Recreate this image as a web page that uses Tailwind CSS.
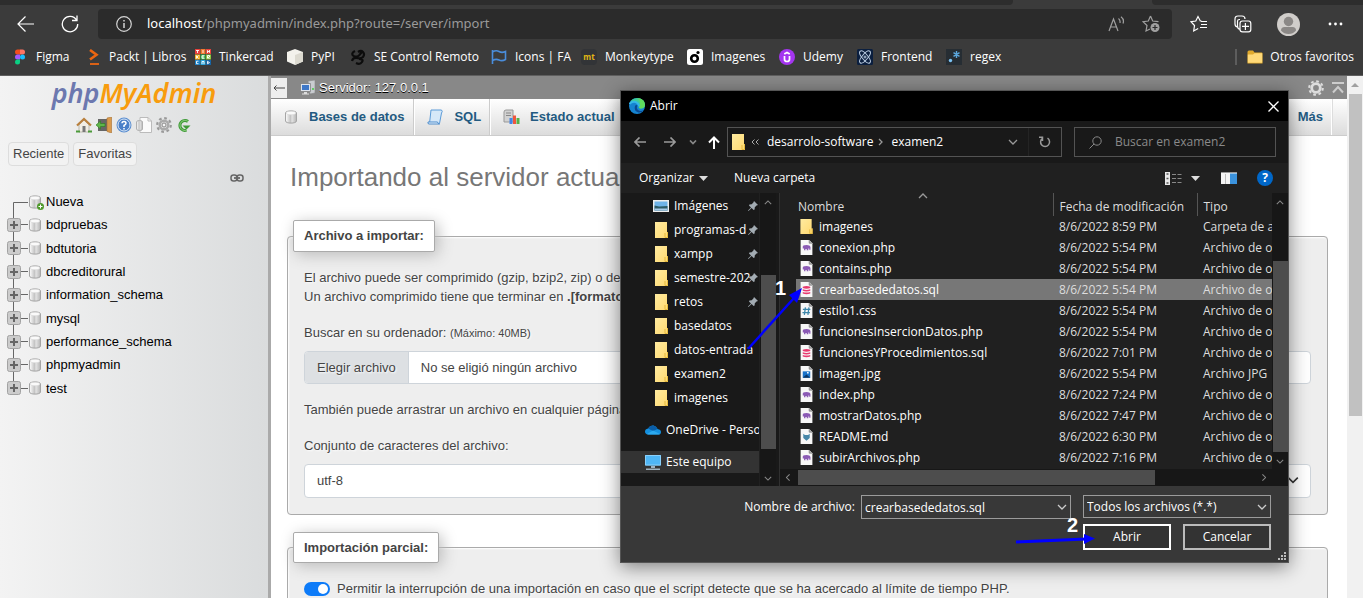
<!DOCTYPE html>
<html lang="es">
<head>
<meta charset="utf-8">
<meta name="viewport" content="width=device-width, initial-scale=1">
<title>localhost / 127.0.0.1 | phpMyAdmin</title>
<script src="https://cdn.jsdelivr.net/npm/@tailwindcss/browser@4"></script>
</head>
<body class="relative flex h-screen flex-col overflow-hidden bg-white font-['Liberation_Sans',Arial,sans-serif] text-[13px]">

<!-- Shared icons -->
<svg class="absolute size-0" aria-hidden="true">
  <defs>
    <linearGradient id="cyl" x1="0" x2="1"><stop offset="0" stop-color="#fff"/><stop offset=".45" stop-color="#c4c4c4"/><stop offset=".6" stop-color="#e2e2e2"/><stop offset="1" stop-color="#b4b4b4"/></linearGradient>
    <linearGradient id="fold" x1="0" x2="1" y2="1"><stop offset="0" stop-color="#ffeba0"/><stop offset="1" stop-color="#ffd970"/></linearGradient>
  </defs>
  <symbol id="db" viewBox="0 0 14 16"><path d="M1.500 4C1.500 1.200 12.500 1.200 12.500 4V12C12.500 14.800 1.500 14.800 1.500 12Z" fill="url(#cyl)" stroke="#a5a5a5"/><ellipse cx="7" cy="4" rx="4.800" ry="1.800" fill="#fafafa" stroke="#d5d5d5" stroke-width=".6"/></symbol>
  <symbol id="plus" viewBox="0 0 14 14"><rect x=".5" y=".5" width="13" height="13" rx="2" fill="#ccc" stroke="#a3a3a3"/><path d="M7 3v8M3 7h8" stroke="#666" stroke-width="2"/></symbol>
  <symbol id="folder" viewBox="0 0 13 16"><path d="M0 0h12v10h1v6H0z" fill="url(#fold)"/><path d="M12.500 10v5.500H10V11" fill="none" stroke="#e5b93c"/></symbol>
  <symbol id="pin" viewBox="0 0 10 10"><path d="M6 0 10 4 8.500 4.600 6.800 6.300 6.600 8.600 5.600 9 3.600 7 .5 10 0 9.500 3 6.400 1 4.400 1.400 3.400 3.700 3.200 5.400 1.500Z" fill="#a3acb3"/></symbol>
  <symbol id="sheet" viewBox="0 0 12 14"><path d="M.5 0H8.500L11.500 3V14H.5Z" fill="#f7f7f7"/><path d="M8.500 0V3H11.500" fill="#aaa" stroke="#777" stroke-width=".6"/></symbol>
  <symbol id="php" viewBox="0 0 12 14"><use href="#sheet"/><path d="M2.500 6Q3 4.800 4.500 5 6 4.500 7.500 5 9.500 5 9.700 6.500V9H8.500V8H7.700V9.500H6.200V8.500H5V9.500H3.700V8H2.500Z" fill="#8b5ab5"/></symbol>
  <symbol id="sql" viewBox="0 0 12 14"><use href="#sheet"/><path d="M2.500 4.500Q6 3 9.500 4.500V5.700Q6 7 2.500 5.700zM2.500 6.800Q6 8 9.500 6.800V8.200Q6 9.500 2.500 8.200zM2.500 9.300Q6 10.500 9.500 9.300V10.700Q6 12 2.500 10.700z" fill="#e8396f"/></symbol>
  <symbol id="css" viewBox="0 0 12 14"><use href="#sheet"/><path d="M5 4 4 11M8.300 4l-1 7M2.600 6h7M2.200 9h7" stroke="#3d87ab" stroke-width="1.200" fill="none"/></symbol>
  <symbol id="jpg" viewBox="0 0 12 14"><use href="#sheet"/><path d="M2.500 5h7v6h-7z" fill="#1a73c9"/><path d="M2.500 11 6 8l3.500 3z" fill="#0b3768"/><path d="M6.500 5.500h1.500v1.500H6.500z" fill="#fff"/></symbol>
  <symbol id="md" viewBox="0 0 12 14"><use href="#sheet"/><path d="M3 4.500l1.500 1h3l1.500-1v4L6 11 3 8.500z" fill="#4787a8"/></symbol>
  <symbol id="chev" viewBox="0 0 10 6"><path d="M1 1 5 5 9 1" fill="none" stroke="currentColor" stroke-width="1.300"/></symbol>
</svg>

<!-- Browser chrome -->
<header class="shrink-0 border-b border-[#5f5f5f] bg-[#3b3b3b] font-['Open_Sans',sans-serif] text-white">
  <div class="flex h-[5px] justify-between">
    <div class="w-[1013px] rounded-br bg-[#2d2d2d]"></div>
    <div class="w-[211px] rounded-bl bg-[#2d2d2d]"></div>
  </div>
  <div class="mt-1 flex h-[30px] items-center">
    <button aria-label="Atrás" class="ml-[17px] w-[18px]"><svg viewBox="0 0 18 18" class="size-[18px]" fill="none" stroke="#fff" stroke-width="1.200"><path d="M17 9H1M8.500 1.500 1 9l7.500 7.500"/></svg></button>
    <button aria-label="Actualizar" class="ml-[26px] w-[18px]"><svg viewBox="0 0 18 18" class="size-[18px]" fill="none" stroke="#fff" stroke-width="1.300"><path d="M15.500 5A7.700 7.700 0 1 0 16.700 9M16 .5V5.500H11"/></svg></button>
    <div class="ml-[19px] mr-[18px] flex h-[30px] flex-1 items-center rounded bg-[#2b2b2b] pl-[18px] pr-3">
      <svg viewBox="0 0 16 16" class="size-4" fill="none" stroke="#d5d5d5" stroke-width="1.200"><circle cx="8" cy="8" r="7.300"/><path d="M8 7v5M8 4v1.600" stroke-width="1.500"/></svg>
      <p class="ml-[15px] flex-1 whitespace-nowrap font-['Noto_Sans',sans-serif] text-[13px] text-[#9a9a9a]"><span class="text-white">localhost</span>/phpmyadmin/index.php?route=/server/import</p>
      <svg viewBox="0 0 17 16" class="h-4 w-[17px]" fill="none" stroke="#a0a0a0" stroke-width="1.200"><path d="M1 15 5.500 3 10 15M2.500 11h6M10.500 2.500Q12.500 4 12 7M13 .8Q16.500 3.500 15 7.500"/></svg>
      <svg viewBox="0 0 18 18" class="ml-[17px] h-[18px] w-[18px]" fill="none" stroke="#a0a0a0" stroke-width="1.200"><path d="M8.500 1 10.700 6 16.500 6.700M8.500 1 6.300 6 1 6.700 5 10.500 4 16 8 14"/><circle cx="13" cy="12.500" r="4.500" fill="#a0a0a0" stroke="none"/><path d="M13 10v5M10.500 12.500h5" stroke="#2b2b2b"/></svg>
    </div>
    <div class="flex items-center pr-[20px]">
      <button aria-label="Favoritos" class="w-[18px]"><svg viewBox="0 0 18 18" class="size-[18px]" fill="none" stroke="#fff" stroke-width="1.200"><path d="M11.500 6H10.300L8 1.500 5.800 6 1 6.700 4.500 10.500 3.700 16 8.200 13.500M11 6.500h6M11 9.500h6M10 12.500h7"/></svg></button>
      <button aria-label="Colecciones" class="ml-[26px] w-[18px]"><svg viewBox="0 0 18 18" class="size-[18px]" fill="none" stroke="#fff" stroke-width="1.200"><path d="M3.500 12Q1 11.500 1 9V4Q1 1 4 1H8Q11 1 11 4M6 14.500Q3.500 14 3.500 11V6Q3.500 4.500 5.500 4.500H6M8.500 6h6Q16.800 6 16.800 8.500v6Q16.800 16.800 14.500 16.800h-6Q6 16.800 6 14.500v-6Q6 6 8.500 6M11.400 8v7M8 11.400h7"/></svg></button>
      <button aria-label="Perfil" class="ml-[25px] w-[23px]"><svg viewBox="0 0 23 23" class="size-[23px]"><circle cx="11.500" cy="11.500" r="11.500" fill="#d0cdca"/><circle cx="11.500" cy="8.500" r="4.700" fill="#8b8886"/><path d="M4 17.500Q4 14 7.500 14h8Q19 14 19 17.500 16 21 11.500 21 7 21 4 17.500" fill="#8b8886"/></svg></button>
      <button aria-label="Más opciones" class="ml-7 w-[15px]"><svg viewBox="0 0 15 4" class="h-1 w-[15px]" fill="#fff"><circle cx="2" cy="2" r="1.400"/><circle cx="7.500" cy="2" r="1.400"/><circle cx="13" cy="2" r="1.400"/></svg></button>
    </div>
  </div>
  <nav aria-label="Marcadores" class="flex h-9 items-center whitespace-nowrap pl-3 pr-[9px] text-[12px]">
    <a href="#" class="flex w-[76px] items-center gap-2"><svg viewBox="0 0 16 16" class="size-4"><path d="M5.500.5H8v5H5.500a2.500 2.500 0 0 1 0-5" fill="#f24e1e"/><path d="M8 .5h2.500a2.500 2.500 0 0 1 0 5H8z" fill="#ff7262"/><path d="M5.500 5.500H8v5H5.500a2.500 2.500 0 0 1 0-5" fill="#a259ff"/><circle cx="10.500" cy="8" r="2.500" fill="#1abcfe"/><path d="M5.500 10.500H8V13a2.500 2.500 0 1 1-2.500-2.500" fill="#0acf83"/></svg>Figma</a>
    <a href="#" class="flex w-[107px] items-center gap-[5px]"><svg viewBox="0 0 16 16" class="size-4" fill="none" stroke="#ec6611"><path d="M2 15h9" stroke-width="1.800"/><path d="M2 1 8.500 5.800 2 10.500" stroke-width="2.600"/></svg>Packt | Libros</a>
    <a href="#" class="flex w-[92px] items-center gap-2"><svg viewBox="0 0 16 16" class="size-4"><path fill="#e8413c" d="M0 0h5v5H0z"/><path fill="#f2782f" d="M5.500 0h5v5h-5z"/><path fill="#e8413c" d="M11 0h5v5h-5z"/><path fill="#f5b72f" d="M0 5.500h5v5H0z"/><path fill="#39b54a" d="M5.500 5.500h5v5h-5z"/><path fill="#8cc63f" d="M11 5.500h5v5h-5z"/><path fill="#1b7fc4" d="M0 11h5v5H0z"/><path fill="#2ba8e0" d="M5.500 11h5v5h-5z"/><path fill="#1565a7" d="M11 11h5v5h-5z"/><path d="M1 1.500h3M2.500 1.500V4M8 1v3M12.500 4V1.500l2 2V1M1.500 6.500v3M3.500 6.500l-1.500 1.500 1.500 1.500M9.500 6.700h-2.500v2.600h2.500M7 8h2M12.500 9.500v-3h2v1.500l-2 .5 2 1M3.500 12.200h-2v2.500h2M7 15v-2.500h2V15M12.500 12.300v2.500l2-1.200z" fill="none" stroke="#fff" stroke-width=".9"/></svg>Tinkercad</a>
    <a href="#" class="flex w-[63px] items-center gap-2"><svg viewBox="0 0 16 16" class="size-4"><path d="M8 0 16 3V12.500L8 16 0 12.500V3z" fill="#f3f2ec"/><path d="M8 6l8-3v9.500L8 16z" fill="#dcdad0"/></svg>PyPI</a>
    <a href="#" class="flex w-[141px] items-center gap-2"><svg viewBox="0 0 16 16" class="size-4" fill="none" stroke="#0c0c0c" stroke-width="2.200"><path d="M5 2Q1 4 3 6.500 6 9 9 6.500L12 3M8 3q3-2 5 0t0 5q-2 2-6 1T2 12M6 14q4 2 6-1t-3-3" /></svg>SE Control Remoto</a>
    <a href="#" class="flex w-[90px] items-center gap-2"><svg viewBox="0 0 16 16" class="size-4" fill="none" stroke="#4a8ddb" stroke-width="1.600"><path d="M1.500 1v14M1.500 3Q5 .8 8 2.500T14.500 2.500V10.500Q11 12.500 8 11T1.500 11.500"/></svg>Icons | FA</a>
    <a href="#" class="flex w-[106px] items-center gap-2"><span class="flex size-4 items-center justify-center rounded-sm bg-[#323437] text-[8px] font-bold text-[#e2b714]">mt</span>Monkeytype</a>
    <a href="#" class="flex w-[92px] items-center gap-2"><svg viewBox="0 0 16 16" class="size-4"><rect width="16" height="16" rx="2.500" fill="#fff"/><circle cx="7.500" cy="9.500" r="3.300" fill="none" stroke="#000" stroke-width="2.600"/><circle cx="11" cy="3.500" r="1.600" fill="#000"/></svg>Imagenes</a>
    <a href="#" class="flex w-[78px] items-center gap-2"><svg viewBox="0 0 16 16" class="size-4"><circle cx="8" cy="8" r="8" fill="#a435f0"/><path d="M5.500 7v3.200Q5.500 12.500 8 12.500t2.500-2.300V7M5.300 5 8 3.400 10.700 5" fill="none" stroke="#fff" stroke-width="1.700"/></svg>Udemy</a>
    <a href="#" class="flex w-[89px] items-center gap-2"><svg viewBox="0 0 16 16" class="size-4"><rect width="16" height="16" rx="1.500" fill="#0b1f3f"/><g fill="none" stroke="#b9cbe0"><ellipse cx="8" cy="8" rx="7.500" ry="2.800" transform="rotate(50 8 8)"/><ellipse cx="8" cy="8" rx="7.500" ry="2.800" transform="rotate(-50 8 8)"/><circle cx="8" cy="8" r="1"/></g></svg>Frontend</a>
    <a href="#" class="flex items-center gap-2"><svg viewBox="0 0 16 16" class="size-4"><path fill="#262d33" d="M0 0h16v16H0z"/><circle cx="4.500" cy="11.500" r="1.700" fill="#7cc4f5"/><path d="M10.500 2v7M7.500 3.700l6 3.600M13.500 3.700l-6 3.600" stroke="#5ba7dd" stroke-width="1.400"/></svg>regex</a>
    <a href="#" class="ml-auto flex items-center gap-[7px]"><span class="mr-[3px] h-4 w-0.5 bg-[#5d5d5d]"></span><svg viewBox="0 0 16 14" class="h-[14px] w-4"><path d="M.5 2Q.5.500 2 .5H6L7.500 2.500H14.500Q15.500 2.500 15.500 3.500V13.500H.5Z" fill="#e0a92c"/><path d="M.8 4.500H6l1.500-1.300h7.700V12.800H.8z" fill="#ffd978"/></svg>Otros favoritos</a>
  </nav>
</header>

<div class="flex min-h-0 flex-1">
  <!-- Navigation panel -->
  <aside class="w-[271px] shrink-0 border-r-[3px] border-[#aaa] bg-linear-to-r from-[#f3f3f3] to-[#dadcdd]">
    <a href="#" class="flex h-[34px] items-center justify-center font-['Noto_Sans',sans-serif] text-[27px] font-semibold italic text-[#6c78af]">php<span class="text-[#f89c0e]">MyAdmin</span></a>
    <div class="mt-[6px] flex h-[18px] items-center justify-center gap-1">
      <svg viewBox="0 0 16 16" class="size-4"><path d="M3 8v7h10V8L8 3z" fill="#f1ede4" stroke="#998" stroke-width=".6"/><path d="M6.500 9h3v6h-3z" fill="#777"/><path d="M1 8.500 8 2l7 6.500" fill="none" stroke="#b9803e" stroke-width="2.200"/><path d="M0 14.500h4M12 14.500h4" stroke="#4c9a3a" stroke-width="2"/></svg>
      <svg viewBox="0 0 16 16" class="size-4"><path d="M2 2h9v12H2z" fill="#666"/><path d="M11 1 15.500 0v16L11 14.500z" fill="#d99a4e" stroke="#a87030" stroke-width=".6"/><path d="M0 8l4.500-4v2.500H9v3H4.500V12z" fill="#5fb54a" stroke="#2b7a1f" stroke-width=".6"/></svg>
      <svg viewBox="0 0 16 16" class="size-4"><circle cx="8" cy="8" r="7.500" fill="#5c8fd0"/><circle cx="8" cy="8" r="6" fill="#4a80c8" stroke="#dbe8f8"/><path d="M6 6.300Q6 4.500 8 4.500t2 1.800Q10 7.500 8 8.500V10M8 11v1.500" fill="none" stroke="#fff" stroke-width="1.500"/></svg>
      <svg viewBox="0 0 16 16" class="size-4"><path d="M4 .5H12L15.500 4v11.500H4z" fill="#fafafa" stroke="#bbb"/><path d="M12 .5V4h3.500" fill="none" stroke="#bbb"/><path d="M.5 5Q.5 3.500 3.500 3.500T6.500 5v7Q6.500 13.500 3.500 13.500T.5 12z" fill="url(#cyl)" stroke="#b0b0b0"/></svg>
      <svg viewBox="0 0 16 16" class="size-4"><circle cx="8" cy="8" r="6.800" fill="none" stroke="#999" stroke-width="2.200" stroke-dasharray="2.700 2.640"/><circle cx="8" cy="8" r="4.300" fill="#ddd" stroke="#aaa" stroke-width="2.400"/><circle cx="8" cy="8" r="2" fill="#f5f5f5" stroke="#888"/></svg>
      <svg viewBox="0 0 16 16" class="size-4"><path d="M10.500 13.200A5 5 0 1 1 12 4.500" fill="none" stroke="#3d9a36" stroke-width="3"/><path d="M10.500 13.200A5 5 0 1 1 12 4.500" fill="none" stroke="#8fd07f" stroke-width="1"/><path d="M6.500 8.500H14.500L10.500 12.500z" fill="#3d9a36"/></svg>
    </div>
    <div class="mt-2 flex gap-1 pl-2">
      <button class="h-6 rounded border border-[#ddd] bg-[#f2f2f2] px-1 text-[13px] text-[#444]">Reciente</button>
      <button class="h-6 rounded border border-[#ddd] bg-[#f2f2f2] px-1 text-[13px] text-[#444]">Favoritas</button>
    </div>
    <div class="mt-2 flex justify-end pr-6"><svg viewBox="0 0 14 8" class="h-2 w-[14px]" fill="none" stroke="#666" stroke-width="1.500"><rect x="1" y="1" width="6" height="6" rx="2.500"/><rect x="7" y="1" width="6" height="6" rx="2.500"/><path d="M4 4h6" stroke-width="1.800"/></svg></div>
    <div class="relative mt-2 h-[210px] pl-[7px]">
      <svg class="absolute left-[13px] top-3 h-[187px] w-4" fill="none" stroke="#666"><path d="M15 .5H.5V187"/></svg>
      <ul id="tree" class="relative grid h-full auto-rows-fr text-[13px] text-black"></ul>
    </div>
  </aside>

  <!-- Main panel -->
  <main class="min-w-0 flex-1 overflow-hidden whitespace-nowrap text-[#444]">
    <div class="flex h-[23px] items-center bg-[#888]">
      <button aria-label="Ocultar panel" class="flex h-5 w-4 items-center justify-center bg-[#eee]"><svg viewBox="0 0 12 6" class="h-[6px] w-3" fill="none" stroke="#444"><path d="M12 3H1M3.500.5 1 3l2.500 2.500"/></svg></button>
      <svg viewBox="0 0 16 16" class="ml-[13px] size-4"><path d="M8 1l7-1v13l-5 1z" fill="#c9ccd0" stroke="#888" stroke-width=".6"/><path d="M.5 3.500h10v8H.5z" fill="#dde3ec" stroke="#777" stroke-width=".7"/><path d="M2 5h7v5H2z" fill="#3f78c8"/><path d="M4 12h3v1.500h2v1H2v-1h2z" fill="#ddd"/><circle cx="13" cy="9" r=".9" fill="#3c3"/></svg>
      <a href="#" class="ml-[3px] text-[13px] text-white [text-shadow:0_1px_0_#000]">Servidor: 127.0.0.1</a>
      <svg viewBox="0 0 16 16" class="ml-auto size-4"><circle cx="8" cy="8" r="6.800" fill="none" stroke="#ddd" stroke-width="2" stroke-dasharray="2.700 2.640"/><circle cx="8" cy="8" r="4.300" fill="none" stroke="#ddd" stroke-width="2.800"/></svg>
      <svg viewBox="0 0 12 12" class="ml-2 mr-[3px] size-3" fill="none" stroke="#ccc" stroke-width="2"><path d="M0 1h12M1 10.500 6 5l5 5.500"/></svg>
    </div>
    <nav class="flex h-[37px] items-stretch border-b border-[#ccc] bg-linear-to-b from-white to-[#dcdcdc] text-[13px] font-bold text-[#235a81]">
      <a href="#" class="flex items-center gap-[11px] border-r border-[#ccc] pl-[13px] pr-[9px]"><svg class="h-4 w-[14px]"><use href="#db"/></svg>Bases de datos</a>
      <a href="#" class="flex items-center gap-[11px] border-l border-r border-l-white border-r-[#ccc] pl-3 pr-2"><svg viewBox="0 0 16 16" class="size-4"><path d="M4 1h10.500Q16 2.500 14.500 4L12.500 14.500H2.500z" fill="#d6e8f8" stroke="#5b9bd8"/><path d="M1 13h9.500Q11 15 12.500 15H2Q.5 15 1 13" fill="#eef6fd" stroke="#4a8bcc"/></svg>SQL</a>
      <a href="#" class="flex items-center gap-[10px] border-l border-white pl-3"><svg viewBox="0 0 17 16" class="h-4 w-[17px]"><path d="M1 3Q1 1 3 1h7v12H1z" fill="#d2d2d2" stroke="#999"/><path d="M3 4h5M3 6.500h5" stroke="#888"/><path d="M6.500 9h3v6h-3z" fill="#4285e8"/><path d="M10 6.500h3V15h-3z" fill="#f0563d"/><path d="M13.500 9h3v6h-3z" fill="#58b148"/></svg>Estado actual</a>
      <a href="#" class="ml-auto flex items-center border-r border-white pr-2">Más</a>
      <span class="w-[15px] border-l border-[#ddd]"></span>
    </nav>
    <div class="pl-4 pr-[19px]">
      <h1 class="mt-[23px] pl-[3px] text-[26px] leading-9 text-[#777]">Importando al servidor actual</h1>
      <fieldset class="mt-[25px] min-w-0 rounded border border-[#aaa] bg-[#eee] px-4 pb-4 shadow-[inset_1px_1px_2px_#fff] [text-shadow:1px_1px_2px_#fff]">
        <legend class="-ml-[11px] flex h-8 items-center rounded-xs border border-[#aaa] bg-white px-[10px] font-bold shadow-[3px_3px_15px_#bbb]">Archivo a importar:</legend>
        <p class="pt-4 leading-[19px]">El archivo puede ser comprimido (gzip, bzip2, zip) o descomprimido.<br>Un archivo comprimido tiene que terminar en <b>.[formato].[compresión]</b>.</p>
        <label for="file" class="mt-[17px] block leading-[19px]">Buscar en su ordenador: <small class="text-[11px]">(Máximo: 40MB)</small></label>
        <div class="relative mt-2 flex h-[33px] overflow-hidden rounded border border-[#ced4da] bg-white">
          <input id="file" type="file" class="absolute inset-0 opacity-0">
          <span class="flex items-center border-r border-[#ced4da] bg-[#dde0e3] px-3">Elegir archivo</span>
          <span class="flex items-center px-3">No se eligió ningún archivo</span>
        </div>
        <p class="mt-4 leading-[19px]">También puede arrastrar un archivo en cualquier página.</p>
        <label for="charset" class="mt-[17px] block leading-[19px]">Conjunto de caracteres del archivo:</label>
        <div class="relative mt-[9px]">
          <select id="charset" class="block h-[34px] w-full appearance-none rounded border border-[#ced4da] bg-white px-3"><option>utf-8</option></select>
          <svg class="absolute right-3 top-3 h-2 w-3 text-[#333]"><use href="#chev"/></svg>
        </div>
      </fieldset>
      <fieldset class="mt-[17px] min-w-0 rounded border border-[#aaa] bg-[#eee] px-4 pb-4 shadow-[inset_1px_1px_2px_#fff] [text-shadow:1px_1px_2px_#fff]">
        <legend class="-ml-[11px] flex h-[31px] items-center rounded-xs border border-[#aaa] bg-white px-[10px] font-bold shadow-[3px_3px_15px_#bbb]">Importación parcial:</legend>
        <label class="mt-4 flex items-center leading-[19px]">
          <input type="checkbox" checked class="peer sr-only">
          <span class="mr-[7px] flex h-[14px] w-[26px] items-center justify-end rounded-full bg-[#0d7bf8] px-0.5"><span class="size-[10px] rounded-full bg-white"></span></span>
          Permitir la interrupción de una importación en caso que el script detecte que se ha acercado al límite de tiempo PHP.
        </label>
      </fieldset>
    </div>
  </main>
  <div class="flex w-4 shrink-0 flex-col items-center bg-[#f1f1f1]">
    <svg viewBox="0 0 8 4" class="my-[7px] h-1 w-2"><path d="M0 4 4 0l4 4z" fill="#a0a0a0"/></svg>
    <div class="h-[322px] w-[13px] bg-[#c1c1c1]"></div>
  </div>
</div>

<!-- File picker window -->
<section role="dialog" aria-label="Abrir" class="absolute left-[620px] top-[90px] flex w-[669px] flex-col border border-[#555] bg-[#191919] font-['Open_Sans',sans-serif] text-[12px] text-white shadow-[0_4px_18px_#0007]">
  <div class="flex h-[30px] items-center bg-black pl-2 pr-[9px]">
    <svg viewBox="0 0 16 16" class="size-4"><circle cx="8" cy="8" r="8" fill="#1583d0"/><path d="M.5 6Q2 0 8.500 0 16 1 16 7q-.5 4-5 3.500Q9 10 10 8.500 9.500 4.500 5 4 2 4 .5 6" fill="#3fcb9a"/><path d="M8.500 0Q16 1 16 7q-.5 4-5 3.500Q9 10 10 8.500q3-4-1.500-8.500" fill="#5fdc5d"/><path d="M.5 6Q2 3.500 5.500 3.700 9.700 4.500 10 8.500" fill="none" stroke="#34b7e8" stroke-width="2"/><path d="M6 8Q4.500 13 9.500 14.500 12 15 14.500 12.500 11 13.500 9 12 7 10 8.500 7.500 7 6.500 6 8" fill="#0b4a94"/></svg>
    <h2 class="ml-[5px] flex-1">Abrir</h2>
    <button aria-label="Cerrar"><svg viewBox="0 0 11 11" class="size-[11px]" stroke="#fff" stroke-width="1.300"><path d="m.5.500 10 10M10.500.5l-10 10"/></svg></button>
  </div>
  <div class="flex h-[42px] items-center pl-[13px] pr-3">
    <svg viewBox="0 0 12 10" class="h-[10px] w-3" fill="none" stroke="#9a9a9a" stroke-width="1.700"><path d="M12 5H1M5.500.500 1 5l4.500 4.500"/></svg>
    <svg viewBox="0 0 12 10" class="ml-[18px] h-[10px] w-3" fill="none" stroke="#9a9a9a" stroke-width="1.700"><path d="M0 5h11M6.500.500 11 5 6.500 9.500"/></svg>
    <svg viewBox="0 0 8 5" class="ml-[13px] h-[5px] w-2" fill="none" stroke="#888" stroke-width="1.700"><path d="m1 .5 3 3 3-3"/></svg>
    <svg viewBox="0 0 12 13" class="ml-[11px] h-[13px] w-3" fill="none" stroke="#fff" stroke-width="2"><path d="M6 13V1.500M1 6.500l5-5 5 5"/></svg>
    <div class="ml-[7px] flex h-[30px] flex-1 items-center whitespace-nowrap border border-[#535353] pl-1">
      <svg class="h-4 w-[13px]"><use href="#folder"/></svg>
      <svg viewBox="0 0 8 6" class="ml-[6px] h-[6px] w-2" fill="none" stroke="#aaa"><path d="M3.500.5 1 3l2.500 2.500M7.500.5 5 3l2.500 2.500"/></svg>
      <span class="ml-2">desarrolo-software</span>
      <svg viewBox="0 0 5 8" class="ml-[5px] h-2 w-[5px]" fill="none" stroke="#999" stroke-width="1.300"><path d="m1 1 3 3-3 3"/></svg>
      <span class="ml-2 flex-1">examen2</span>
      <svg class="mr-[10px] h-[6px] w-[10px] text-[#999]"><use href="#chev"/></svg>
      <span class="flex h-7 w-[33px] items-center justify-center border-l border-[#242424]"><svg viewBox="0 0 12 12" class="size-3" fill="none" stroke="#999" stroke-width="1.500"><path d="M8.500 2.200A4.500 4.500 0 1 1 3.500 2.300M3.500 5V1.200H0"/></svg></span>
    </div>
    <label class="ml-3 flex h-[30px] w-[202px] items-center border border-[#535353] pl-[14px]">
      <svg viewBox="0 0 13 13" class="size-[13px] shrink-0" fill="none" stroke="#888"><circle cx="8" cy="5" r="4.200"/><path d="M5 8 .5 12.500"/></svg>
      <input type="search" aria-label="Buscar" placeholder="Buscar en examen2" class="ml-[13px] w-full min-w-0 bg-transparent placeholder:text-[#8a8a8a]">
    </label>
  </div>
  <div class="flex h-[30px] items-center bg-[#202020] pl-[18px] pr-[15px]">
    <button class="flex w-[95px] items-center gap-[5px]">Organizar<svg viewBox="0 0 9 5" class="h-[5px] w-[9px]"><path d="M0 0h9L4.500 5z" fill="#ddd"/></svg></button>
    <button>Nueva carpeta</button>
    <svg viewBox="0 0 17 13" class="ml-auto h-[13px] w-[17px]"><path d="M0 0h5v13H0z" fill="#e8e8e8"/><path d="M1.500 2h2M1.500 6.500h2M1.500 11h2" stroke="#555" stroke-width="1.500"/><path d="M7 2.500h4M12.500 2.500h4M7 6.500h4M12.500 6.500h4M7 10.500h4M12.500 10.500h4" stroke="#888"/></svg>
    <svg viewBox="0 0 9 5" class="ml-[9px] h-[5px] w-[9px]"><path d="M0 0h9L4.500 5z" fill="#ddd"/></svg>
    <svg viewBox="0 0 16 12" class="ml-[21px] h-3 w-4"><path d="M0 0h16v12H0z" fill="#f4f4f4"/><path d="M4.500 2v10" stroke="#bbb"/><path d="M9 1.500h7V12H9z" fill="#3b93dd"/><path d="M0 .5h16" stroke="#999"/></svg>
    <button aria-label="Ayuda" class="ml-5 flex size-4 items-center justify-center rounded-full bg-[#0067c8] text-[12px] font-bold">?</button>
  </div>
  <div class="flex h-[293px]">
    <div class="flex w-[138px] flex-col overflow-hidden whitespace-nowrap pt-px">
      <ul id="places"></ul>
      <div class="mt-1 flex h-8 items-center pl-6"><svg viewBox="0 0 16 10" class="h-[10px] w-4 shrink-0"><path d="M3 9.500Q0 9 0 6.500 0 4 3 3.500 5 0 8.500.5 11.500 1 12.500 4 16 4.500 16 7 16 9.500 13.500 9.500z" fill="#1490df"/><path d="M3 3.500Q5 0 8.500.5 11.500 1 12.500 4L8 6z" fill="#0a5ea8"/><path d="M2 9 8 5.500 15 9q-1 .8-2 .5H3z" fill="#2ca9ee"/></svg><span class="ml-[5px]">OneDrive - Person</span></div>
      <div class="mt-[5px] flex h-[22px] items-center bg-[#333] pl-6"><svg viewBox="0 0 16 15" class="h-[15px] w-4"><path d="M0 0h16v10.500H0z" fill="#4fb6f5"/><path d="M.5.5h15v9.500H.5z" fill="none" stroke="#8bd0fa"/><path d="M6 11h4v2H6zM1 13.500h14v1.500H1z" fill="#9fb3c0"/></svg><span class="ml-[5px]">Este equipo</span></div>
    </div>
    <div class="flex w-[17px] flex-col items-center border-l border-[#202020] bg-[#171717] text-[#8a8a8a]">
      <svg class="mt-[7px] h-[5px] w-2 rotate-180"><use href="#chev"/></svg>
      <div class="mt-[70px] h-[174px] w-[15px] bg-[#4d4d4d]"></div>
      <svg class="mt-[27px] h-[5px] w-2"><use href="#chev"/></svg>
    </div>
    <div class="ml-[3px] flex min-w-0 flex-1 flex-col border-l border-[#303030] bg-[#202020]">
      <div class="flex h-[276px]">
        <div class="relative min-w-0 flex-1 overflow-hidden pl-4">
          <svg class="absolute left-[138px] top-0 h-[6px] w-[10px] rotate-180 text-[#999]"><use href="#chev"/></svg>
          <table class="w-full table-fixed whitespace-nowrap text-left">
            <thead><tr class="h-[23px] text-[#ddd]"><th class="w-[257px] border-r border-[#555] pl-0.5 pt-1 font-normal">Nombre</th><th class="w-36 border-r border-[#555] pl-[6px] pt-1 font-normal">Fecha de modificación</th><th class="overflow-hidden pl-[6px] pt-1 font-normal">Tipo</th></tr></thead>
            <tbody id="files"></tbody>
          </table>
        </div>
        <div class="flex w-4 flex-col items-center bg-[#171717] text-[#8a8a8a]">
          <svg class="mt-[7px] h-[5px] w-2 rotate-180"><use href="#chev"/></svg>
          <div class="mt-14 h-[191px] w-[15px] bg-[#4d4d4d]"></div>
          <svg class="mt-[7px] h-[5px] w-2"><use href="#chev"/></svg>
        </div>
      </div>
      <div class="flex h-[17px] items-center bg-[#171717] text-[#8a8a8a]">
        <svg class="ml-1 h-[5px] w-2 rotate-90"><use href="#chev"/></svg>
        <div class="ml-[6px] h-[15px] w-[357px] bg-[#4d4d4d]"></div>
        <svg class="ml-auto mr-5 h-[5px] w-2 -rotate-90"><use href="#chev"/></svg>
      </div>
    </div>
  </div>
  <div class="relative h-[76px] bg-[#383838] pr-[17px] pt-[9px]">
    <div class="flex items-start justify-end">
      <label for="fname" class="mr-[6px] leading-6">Nombre de archivo:</label>
      <div class="relative mr-3 w-[210px]"><input id="fname" value="crearbasededatos.sql" class="block h-6 w-full border border-[#9b9b9b] bg-[#383838] px-[3px]"><svg class="absolute right-1 top-[9px] h-[6px] w-[10px] text-[#ccc]"><use href="#chev"/></svg></div>
      <div class="relative w-[188px]"><select aria-label="Tipo de archivo" class="block h-[23px] w-full appearance-none border border-[#9b9b9b] bg-[#383838] px-[3px]"><option>Todos los archivos (*.*)</option></select><svg class="absolute right-1 top-[9px] h-[6px] w-[10px] text-[#ccc]"><use href="#chev"/></svg></div>
    </div>
    <div class="mt-[5px] flex justify-end gap-3">
      <button class="h-[26px] w-[88px] border-2 border-white bg-[#333]">Abrir</button>
      <button class="h-[26px] w-[88px] border-2 border-[#bbb] bg-[#333]">Cancelar</button>
    </div>
    <svg viewBox="0 0 8 8" class="absolute bottom-0.5 right-0.5 size-2" fill="#bbb"><path d="M6 0h2v2H6zM3 3h2v2H3zM6 3h2v2H6zM0 6h2v2H0zM3 6h2v2H3zM6 6h2v2H6z"/></svg>
  </div>
</section>

<!-- Step annotations drawn over the window -->
<svg class="pointer-events-none absolute left-[740px] top-[280px] h-[75px] w-[70px]"><path d="M8 69 54 18" stroke="#00f" stroke-width="2.500"/><path d="M62 8 49 15 57 23z" fill="#00f"/></svg>
<svg class="pointer-events-none absolute left-[1010px] top-[528px] h-6 w-[90px]"><path d="M6 14 76 11" stroke="#00f" stroke-width="3"/><path d="M85 10.500 74 6v10z" fill="#00f"/></svg>
<strong class="absolute left-[775px] top-[278px] text-[20px] leading-5 text-white">1</strong>
<strong class="absolute left-[1067px] top-[515px] text-[20px] leading-5 text-white">2</strong>

<script>
const tree = ['Nueva','bdpruebas','bdtutoria','dbcreditorural','information_schema','mysql','performance_schema','phpmyadmin','test'];
document.getElementById('tree').innerHTML = tree.map((name, i) => `
  <li class="flex items-center">
    ${i ? '<svg class="size-[14px]"><use href="#plus"/></svg><span class="h-px w-[7px] bg-[#666]"></span>' : '<span class="w-[21px]"></span>'}
    <span class="relative"><svg class="h-4 w-[14px]"><use href="#db"/></svg>${i ? '' : '<svg viewBox="0 0 7 7" class="absolute -right-0.5 bottom-0 size-[7px]"><circle cx="3.500" cy="3.500" r="3.500" fill="#4f9a2c"/><path d="M3.500 1.500v4M1.500 3.500h4" stroke="#fff"/></svg>'}</span>
    <a href="#" class="ml-1">${name}</a>
  </li>`).join('');

const places = [['Imágenes',1],['programas-d',1],['xampp',1],['semestre-202',1],['retos',1],['basedatos',0],['datos-entrada',0],['examen2',0],['imagenes',0]];
document.getElementById('places').innerHTML = places.map(([name, pinned], i) => `
  <li class="flex h-6 items-center ${i ? 'pl-[34px]' : 'pl-8'}">
    ${i ? '<svg class="h-4 w-[13px] shrink-0"><use href="#folder"/></svg>' : '<svg viewBox="0 0 16 12" class="h-3 w-4 shrink-0"><path d="M0 0h16v12H0z" fill="#eee"/><path d="M1.500 1.500h13v9h-13z" fill="#6fb3e8"/><path d="M1.500 5.500 6 6.500l8.500-.5v4.500h-13z" fill="#2d5b66"/><path d="M1.500 8.500h13v2h-13z" fill="#a9cbe8"/></svg>'}
    <span class="${i ? 'ml-[6px]' : 'ml-[5px]'} ${pinned ? 'w-[74px]' : ''}">${name}</span>
    ${pinned ? '<svg class="size-[10px] shrink-0"><use href="#pin"/></svg>' : ''}
  </li>`).join('');

const files = [
  ['folder','imagenes','8:59','Carpeta de ar'],['php','conexion.php','5:54'],['php','contains.php','5:54'],
  ['sql','crearbasededatos.sql','5:54'],['css','estilo1.css','5:54'],['php','funcionesInsercionDatos.php','5:54'],
  ['sql','funcionesYProcedimientos.sql','7:01'],['jpg','imagen.jpg','5:54','Archivo JPG'],['php','index.php','7:24'],
  ['php','mostrarDatos.php','7:47'],['md','README.md','6:30'],['php','subirArchivos.php','7:16']];
document.getElementById('files').innerHTML = files.map(([icon, name, time, type], i) => `
  <tr class="h-[21px] ${i === 3 ? 'bg-[#777]' : ''}">
    <td class="p-0"><span class="flex items-center gap-[6px] pl-1"><svg class="h-[15px] w-[13px]"><use href="#${icon}"/></svg>${name}</span></td>
    <td class="p-0 pl-[6px] text-[#ddd]">8/6/2022 ${time} PM</td>
    <td class="overflow-hidden p-0 pl-[6px] text-[#ddd]">${type || 'Archivo de o'}</td>
  </tr>`).join('');
</script>
</body>
</html>
